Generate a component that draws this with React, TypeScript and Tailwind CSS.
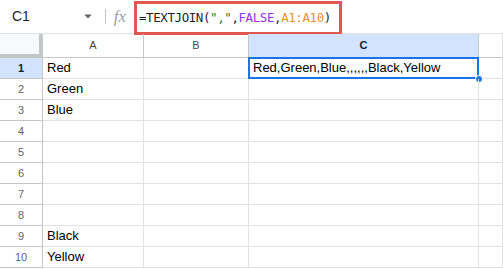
import React from "react";

const rows: string[] = ["Red", "Green", "Blue", "", "", "", "", "", "Black", "Yellow"];

function Caret() {
  return (
    <svg width="8" height="5" viewBox="0 0 10 6" className="ml-auto mr-[13px]">
      <path d="M0.5 0.5 L9.5 0.5 L5 5.5 Z" fill="#5f6368" />
    </svg>
  );
}

function FormulaBar() {
  return (
    <div className="flex h-[34px] items-stretch border-b border-[#e1e3e1] bg-white">
      <div className="flex w-[105px] items-center pl-[12px] text-[14px] text-[#1f1f1f]">
        <span>C1</span>
        <Caret />
      </div>
      <div className="my-[9px] w-px bg-[#c4c7c5]" />
      <div className="flex w-[28px] items-center justify-center font-['Liberation_Serif',serif] text-[17px] italic text-[#9aa0a6]">
        fx
      </div>
      <div className="mt-[1px] mb-[-2px] flex w-[208px] items-center border-[3px] border-[#e0574d] pl-[2px] font-['DejaVu_Sans_Mono',monospace] text-[12.5px] tracking-[-0.42px] text-[#1f1f1f]">
        <span>=TEXTJOIN(</span>
        <span className="text-[#188038]">","</span>
        <span>,</span>
        <span className="text-[#9334e6]">FALSE</span>
        <span>,</span>
        <span className="text-[#e8912d]">A1:A10</span>
        <span>)</span>
      </div>
      <div className="flex-1" />
    </div>
  );
}

export default function App() {
  const cell = "border-r border-b border-[#e1e1e1] h-[21px]";
  return (
    <div className="h-[269px] w-[503px] overflow-hidden bg-white font-['Liberation_Sans',Arial,sans-serif]">
      <FormulaBar />
      <div className="grid grid-cols-[43px_101px_105px_230px_23px] border-r border-[#e1e1e1] w-[503px]">
        {/* header row */}
        <div className="h-[24px] border-r-[4px] border-b-[4px] border-[#c4c7c5] bg-[#f8f9fa]" />
        <div className="flex h-[24px] items-center justify-center border-r border-b border-[#c4c7c5] text-[11px] text-[#444746]">A</div>
        <div className="flex h-[24px] items-center justify-center border-r border-b border-[#c4c7c5] text-[11px] text-[#444746]">B</div>
        <div className="flex h-[24px] items-center justify-center border-r border-b border-[#c4c7c5] bg-[#d3e3fd] text-[11px] font-bold text-[#0b1e48]">C</div>
        <div className="h-[24px] border-b border-[#c4c7c5]" />

        {rows.map((v, i) => (
          <React.Fragment key={i}>
            <div
              className={
                i === 0
                  ? "flex h-[21px] items-center justify-center border-r border-b border-[#c4c7c5] bg-[#d3e3fd] text-[11px] font-bold text-[#0b1e48]"
                  : "flex h-[21px] items-center justify-center border-r border-b border-[#c4c7c5] text-[11px] text-[#5f6368]"
              }
            >
              {i + 1}
            </div>
            <div className={`${cell} flex items-center pl-[4px] text-[13px] text-black`}>{v}</div>
            <div className={cell} />
            <div className={`${cell} relative`}>
              {i === 0 && (
                <>
                  <div className="absolute inset-x-[-1px] top-[-1px] bottom-[-1px] flex items-center border-2 border-[#1a73e8] pl-[3px] text-[13px] text-black">
                    Red,Green,Blue,,,,,,Black,Yellow
                  </div>
                  <div className="absolute right-[-5px] bottom-[-5px] h-[8px] w-[8px] rounded-full border border-white bg-[#1a73e8]" />
                </>
              )}
            </div>
            <div className="h-[21px] border-b border-[#e1e1e1]" />
          </React.Fragment>
        ))}
      </div>
    </div>
  );
}
